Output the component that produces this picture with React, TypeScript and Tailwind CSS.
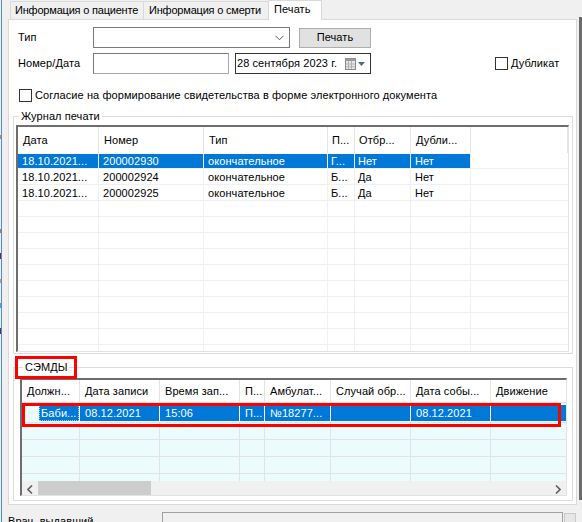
import React from "react";

const listCols = [
  { w: 81, h: "Дата", p: 5 },
  { w: 105, h: "Номер", p: 5 },
  { w: 124, h: "Тип", p: 5 },
  { w: 27, h: "П...", p: 4 },
  { w: 56, h: "Отбр...", p: 4 },
  { w: 60, h: "Дубли...", p: 5 },
];

const listRows = [
  ["18.10.2021...", "200002930", "окончательное", "Г...", "Нет", "Нет"],
  ["18.10.2021...", "200002924", "окончательное", "Б...", "Да", "Нет"],
  ["18.10.2021...", "200002925", "окончательное", "Б...", "Да", "Нет"],
];

const gridCols = [
  { w: 58, h: "Должн..." },
  { w: 80, h: "Дата записи" },
  { w: 80, h: "Время зап..." },
  { w: 25, h: "П..." },
  { w: 66, h: "Амбулат..." },
  { w: 80, h: "Случай обр..." },
  { w: 80, h: "Дата собы..." },
];

const gridRow = ["Баби...", "08.12.2021", "15:06", "П...", "№18277...", "", "08.12.2021", ""];

function CheckBox() {
  return <div className="w-[13px] h-[13px] border border-[#333333] bg-white shrink-0" />;
}

function ListView() {
  return (
    <div className="h-[227px] w-[553px] border-t-2 border-l-2 border-[#6e6e6e] border-r border-b border-r-[#e3e3e3] border-b-[#e3e3e3] bg-white overflow-hidden flex flex-col">
      <div className="h-[26px] flex shrink-0">
        {listCols.map((c, i) => (
          <div
            key={i}
            style={{ width: c.w, paddingLeft: c.p }}
            className="h-full border-r border-[#e5e5e5] flex items-center pt-[1px] shrink-0 whitespace-nowrap overflow-hidden"
          >
            {c.h}
          </div>
        ))}
        <div className="flex-1 border-r border-[#e5e5e5]" />
      </div>
      {Array.from({ length: 13 }).map((_, r) => {
        const row = listRows[r];
        const sel = r === 0;
        return (
          <div key={r} className="h-[16px] flex shrink-0 border-b border-[#f0f0f0]">
            {listCols.map((c, i) => (
              <div key={i} style={{ width: c.w }} className="h-full border-r border-[#f0f0f0] shrink-0 pt-[1px]">
                <div
                  style={{ paddingLeft: c.p - 1 }}
                  className={
                    "h-full whitespace-nowrap overflow-hidden flex items-center " +
                    (sel ? "bg-[#0078d7] text-white" : "")
                  }
                >
                  {row ? row[i] : ""}
                </div>
              </div>
            ))}
            <div className="flex-1" />
          </div>
        );
      })}
    </div>
  );
}

function DataGrid() {
  return (
    <div className="h-[118px] w-[547px] border-t-2 border-l-2 border-[#6e6e6e] border-r border-b border-r-[#e3e3e3] border-b-[#e3e3e3] bg-[#ecfcfd] overflow-hidden flex flex-col">
      <div className="h-[23px] flex shrink-0 bg-white border-b border-[#e3e3e3]">
        {gridCols.map((c, i) => (
          <div
            key={i}
            style={{ width: c.w }}
            className="h-full border-r border-[#e3e3e3] flex items-center pl-[5px] shrink-0 whitespace-nowrap overflow-hidden"
          >
            {c.h}
          </div>
        ))}
        <div className="flex-1 flex items-center pl-[5px] whitespace-nowrap">Движение</div>
      </div>
      <div className="h-[20px] flex shrink-0 border-b border-[#e3e3e3]">
        <div className="w-[58px] h-full border-r border-white flex shrink-0 pt-[2px] pb-[1px]">
          <div className="w-[17px] h-full" />
          <div className="flex-1 h-full bg-[#0078d7] text-white border border-dotted border-[#9cc7ee] flex items-center pl-[1px] whitespace-nowrap overflow-hidden">
            {gridRow[0]}
          </div>
        </div>
        {gridCols.slice(1).map((c, i) => (
          <div key={i} style={{ width: c.w }} className="h-full border-r border-white shrink-0 pt-[2px] pb-[1px]">
            <div className="h-full bg-[#0078d7] text-white flex items-center pl-[5px] whitespace-nowrap overflow-hidden">
              {gridRow[i + 1]}
            </div>
          </div>
        ))}
        <div className="flex-1 h-full pt-[2px] pb-[1px]">
          <div className="h-full bg-[#0078d7]" />
        </div>
      </div>
      {[0, 1, 2, 3].map((r) => (
        <div key={r} className={(r === 3 ? "h-[7px]" : "h-[17px] border-b border-[#e3e3e3]") + " flex shrink-0"}>
          {gridCols.map((c, i) => (
            <div key={i} style={{ width: c.w }} className="h-full border-r border-[#e3e3e3] shrink-0" />
          ))}
          <div className="flex-1" />
        </div>
      ))}
      <div className="h-[16px] flex items-center bg-[#f0f0f0] shrink-0">
        <div className="w-[16px] h-full flex items-center justify-center">
          <svg width="6" height="9" viewBox="0 0 6 9">
            <polyline points="5,0.5 1,4.5 5,8.5" fill="none" stroke="#606060" strokeWidth="1.6" />
          </svg>
        </div>
        <div className="w-[113px] h-full bg-[#cdcdcd]" />
        <div className="flex-1" />
        <div className="w-[16px] h-full flex items-center justify-center">
          <svg width="6" height="9" viewBox="0 0 6 9">
            <polyline points="1,0.5 5,4.5 1,8.5" fill="none" stroke="#606060" strokeWidth="1.6" />
          </svg>
        </div>
      </div>
    </div>
  );
}

export default function App() {
  return (
    <div className="relative w-[582px] h-[522px] bg-[#f0f0f0] overflow-hidden flex font-['Liberation_Sans',Arial,sans-serif] text-[11px] leading-[13px] tracking-[0.08px] text-black">
      {/* left strip of window behind */}
      <div className="w-[3px] h-full flex shrink-0">
        <div className="w-[1px] h-full flex flex-col">
          <div className="h-[135px]" />
          <div className="h-[4px] bg-[#d08a2c]" />
          <div className="h-[90px]" />
          <div className="h-[4px] bg-[#cc7a1e]" />
          <div className="h-[20px]" />
          <div className="h-[6px] bg-[#7a1e6e]" />
          <div className="h-[20px]" />
          <div className="h-[4px] bg-[#d89a50]" />
          <div className="h-[20px]" />
          <div className="h-[5px] bg-[#5aa0d8]" />
          <div className="h-[20px]" />
          <div className="h-[6px] bg-[#7a1e6e]" />
        </div>
        <div className="w-[1px] h-full bg-[#4a8fd6]" />
        <div className="w-[1px] h-full" />
      </div>

      <div className="w-[574px] h-full flex flex-col pl-[5px] shrink-0">
        {/* tabs */}
        <div className="h-[19px] flex items-end pl-[2px] shrink-0 relative z-10">
          <div className="w-[134px] h-[18px] border border-b-0 border-[#d9d9d9] bg-[#f0f0f0] flex items-center pl-[4px] whitespace-nowrap tracking-[-0.2px]">
            Информация о пациенте
          </div>
          <div className="w-[125px] h-[18px] border border-b-0 border-l-0 border-[#d9d9d9] bg-[#f0f0f0] flex items-center pl-[5px] whitespace-nowrap tracking-[-0.2px]">
            Информация о смерти
          </div>
          <div className="w-[53px] h-[20px] -mb-[1px] border border-b-0 border-l-0 border-[#d9d9d9] bg-white flex items-start pt-[2px] pl-[5px] whitespace-nowrap">
            Печать
          </div>
        </div>

        {/* panel */}
        <div className="h-[486px] w-[569px] border border-[#d9d9d9] bg-white flex flex-col shrink-0">
          <div className="flex items-center mt-[7px] pl-[9px]">
            <div className="w-[75px]">Тип</div>
            <div className="w-[197px] h-[21px] border border-[#7a7a7a] bg-white flex items-center justify-end pr-[5px]">
              <svg width="9" height="6" viewBox="0 0 9 6">
                <polyline points="0.5,0.8 4.5,4.8 8.5,0.8" fill="none" stroke="#555" strokeWidth="1" />
              </svg>
            </div>
            <div className="ml-[9px] w-[72px] h-[20px] border border-[#adadad] bg-[#e1e1e1] flex items-center justify-center">
              Печать
            </div>
          </div>

          <div className="flex items-center mt-[5px] pl-[9px]">
            <div className="w-[75px]">Номер/Дата</div>
            <div className="w-[136px] h-[21px] border border-[#a9a9a9] border-t-[#7a7a7a] border-l-[#7a7a7a] bg-white" />
            <div className="ml-[6px] w-[136px] h-[21px] border border-[#333333] bg-white flex items-center pl-[1px]">
              <span className="whitespace-nowrap">28 сентября 2023 г.</span>
              <div className="flex-1" />
              <svg width="22" height="12" viewBox="0 0 22 12" className="mr-[3px]">
                <rect x="0.5" y="0.5" width="10" height="11" fill="#e8e8e8" stroke="#8a8a8a" />
                <rect x="0.5" y="0.5" width="10" height="2.5" fill="#9a9a9a" />
                <line x1="3.5" y1="3" x2="3.5" y2="11" stroke="#b0b0b0" />
                <line x1="6.5" y1="3" x2="6.5" y2="11" stroke="#b0b0b0" />
                <line x1="1" y1="6" x2="10" y2="6" stroke="#b0b0b0" />
                <line x1="1" y1="8.8" x2="10" y2="8.8" stroke="#b0b0b0" />
                <polygon points="13,4 20,4 16.5,8" fill="#4d6a8a" />
              </svg>
            </div>
            <div className="ml-[124px] flex items-center">
              <CheckBox />
              <span className="ml-[3px]">Дубликат</span>
            </div>
          </div>

          <div className="flex items-center mt-[15px] pl-[10px]">
            <CheckBox />
            <span className="ml-[3px] whitespace-nowrap">
              Согласие на формирование свидетельства в форме электронного документа
            </span>
          </div>

          <fieldset className="ml-[4px] mt-[8px] w-[560px] border border-[#dcdcdc] p-0 flex flex-col">
            <legend className="ml-[5px] px-[2px] leading-[13px]">Журнал печати</legend>
            <div className="ml-[2px] mt-[2px] mb-[1px]">
              <ListView />
            </div>
          </fieldset>

          <fieldset className="ml-[4px] mt-[7px] w-[560px] border border-[#dcdcdc] p-0 flex flex-col">
            <legend className="ml-[9px] px-[2px] leading-[13px]">СЭМДЫ</legend>
            <div className="ml-[6px] mt-[4px] mb-[4px]">
              <DataGrid />
            </div>
          </fieldset>
        </div>

        {/* bottom area */}
        <div className="flex items-start pt-[7px]">
          <div className="w-[154px] pt-[3px] whitespace-nowrap">Врач, выдавший</div>
          <div className="w-[401px] h-[14px] border border-[#a0a0a0] bg-[#f0f0f0]" />
          <div className="ml-[1px] mt-[1px] w-[12px] h-[12px] border border-[#c8c8c8] bg-[#e6e6e6]" />
        </div>
      </div>

      <div className="w-[2px] h-full shrink-0" />
      <div className="w-[3px] h-[483px] mt-[17px] bg-[#6b6b6b] shrink-0" />

      {/* annotation overlays */}
      <div className="absolute left-[15px] top-[356px] w-[62px] h-[23px] border-[3px] border-[#ff0000] pointer-events-none" />
      <div className="absolute left-[22px] top-[403px] w-[539px] h-[24px] border-[3px] border-[#ff0000] pointer-events-none" />
    </div>
  );
}
